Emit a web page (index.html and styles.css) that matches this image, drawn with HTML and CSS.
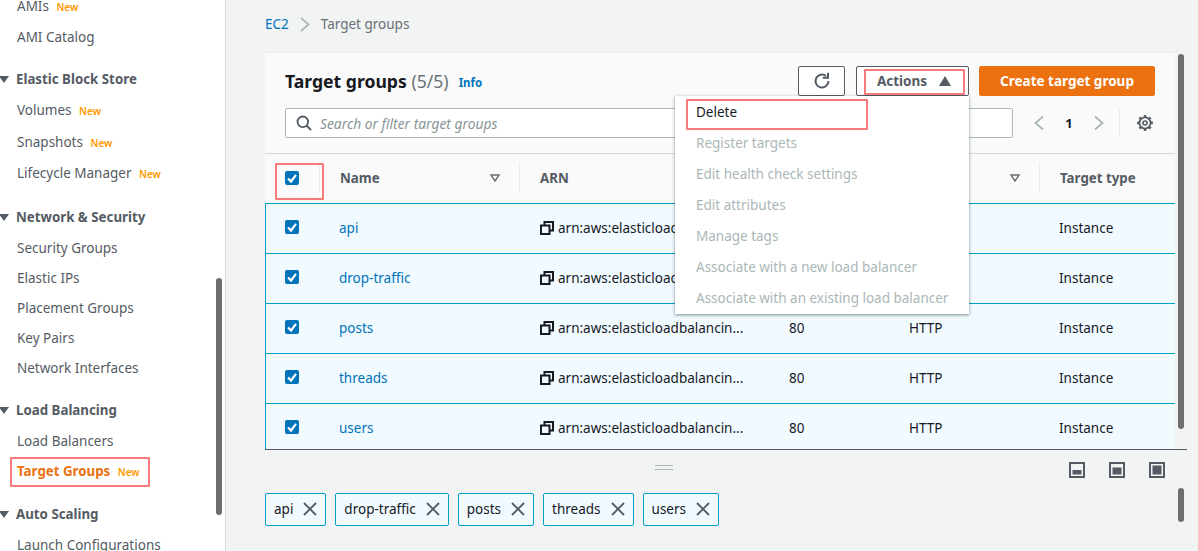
FILE: index.html
```html
<!DOCTYPE html>
<html>
<head>
  <title>Target groups</title>
  <link rel="stylesheet" href="styles.css">
</head>
<body>
  <svg class="defs">
    <symbol id="check" viewBox="0 0 14 14"><path d="M3 7.500 6 10.500 11 3.800" fill="none" stroke="#fff" stroke-width="2.200"/></symbol>
    <symbol id="copy" viewBox="0 0 14 14"><path d="M1 4.500h8.500V13H1zM4.500 4V1H13v8.500h-3" fill="none" stroke="#16191f" stroke-width="2"/></symbol>
    <symbol id="close" viewBox="0 0 14 14"><path d="M1 1 13 13M13 1 1 13" fill="none" stroke="#545b64" stroke-width="1.800"/></symbol>
    <symbol id="sort" viewBox="0 0 10 8"><path d="M1 1h8L5 7z" fill="#fff" stroke="#687078" stroke-width="1.500"/></symbol>
  </svg>

  <aside class="sidebar">
    <ul class="nav">
      <li class="nav-item nav-first">AMIs <span class="new">New</span></li>
      <li class="nav-item">AMI Catalog</li>
      <li class="nav-head">Elastic Block Store</li>
      <li class="nav-item">Volumes <span class="new">New</span></li>
      <li class="nav-item nav-wide">Snapshots <span class="new">New</span></li>
      <li class="nav-item">Lifecycle Manager <span class="new">New</span></li>
      <li class="nav-head nav-head-14">Network &amp; Security</li>
      <li class="nav-item">Security Groups</li>
      <li class="nav-item nav-tight">Elastic IPs</li>
      <li class="nav-item nav-tight">Placement Groups</li>
      <li class="nav-item nav-tight">Key Pairs</li>
      <li class="nav-item nav-tight">Network Interfaces</li>
      <li class="nav-head">Load Balancing</li>
      <li class="nav-item">Load Balancers</li>
      <li class="nav-item nav-tight nav-active">Target Groups <span class="new">New</span></li>
      <li class="nav-head nav-head-13">Auto Scaling</li>
      <li class="nav-item">Launch Configurations</li>
    </ul>
    <div class="side-scroll"></div>
  </aside>

  <main class="main">
    <div class="crumbs">
      <a class="link">EC2</a>
      <svg class="crumb-sep" width="10" height="15" viewBox="0 0 10 15"><path d="M1 1 8.500 7.500 1 14" fill="none" stroke="#aab7b8" stroke-width="1.700"/></svg>
      <span class="crumb-now">Target groups</span>
    </div>

    <section class="panel">
      <div class="panel-head">
        <div class="title-row">
          <h1 class="title">Target groups <span class="count">(5/5)</span></h1>
          <a class="info">Info</a>
          <div class="actions">
            <button class="btn btn-icon">
              <svg width="18" height="18" viewBox="0 0 18 18"><path d="M15.500 9A6.500 6.500 0 1 1 13 3.900" fill="none" stroke="#545b64" stroke-width="2"/><path d="M9.800 5.800h5.200V.8" fill="none" stroke="#545b64" stroke-width="2"/></svg>
            </button>
            <button class="btn btn-actions">Actions <svg width="12" height="10" viewBox="0 0 12 10"><path d="M0 10 6 0l6 10z" fill="#545b64"/></svg></button>
            <button class="btn btn-primary">Create target group</button>
          </div>
        </div>
        <div class="search-row">
          <div class="search">
            <svg width="16" height="16" viewBox="0 0 16 16"><circle cx="6.800" cy="6.800" r="5.300" fill="none" stroke="#545b64" stroke-width="1.800"/><path d="M10.600 10.600 15 15" stroke="#545b64" stroke-width="2"/></svg>
            <span class="placeholder">Search or filter target groups</span>
          </div>
          <div class="pager">
            <svg width="12" height="16" viewBox="0 0 12 16"><path d="M10 1.500 2.500 8l7.500 6.500" fill="none" stroke="#aab7b8" stroke-width="1.800"/></svg>
            <b class="page">1</b>
            <svg width="12" height="16" viewBox="0 0 12 16"><path d="M2 1.500 9.500 8 2 14.500" fill="none" stroke="#aab7b8" stroke-width="1.800"/></svg>
          </div>
          <div class="gear-box">
            <svg width="16" height="16" viewBox="0 0 16 16"><circle cx="8" cy="8" r="5.600" fill="none" stroke="#545b64" stroke-width="1.800"/><circle cx="8" cy="8" r="6.900" fill="none" stroke="#545b64" stroke-width="2" stroke-dasharray="2.500 2.920" transform="rotate(-12 8 8)"/><circle cx="8" cy="8" r="2" fill="none" stroke="#545b64" stroke-width="1.600"/></svg>
          </div>
        </div>
      </div>

      <div class="row row-head">
        <div class="cell-check"><svg class="checkbox"><use href="#check"/></svg></div>
        <div class="cell-th">Name <svg class="sort"><use href="#sort"/></svg></div>
        <div class="cell-th">ARN</div>
        <div class="cell-th"></div>
        <div class="cell-th"><span></span><svg class="sort"><use href="#sort"/></svg></div>
        <div class="cell-th cell-last">Target type</div>
      </div>

      <div class="row row-body">
        <div class="cell-check"><svg class="checkbox"><use href="#check"/></svg></div>
        <a class="link">api</a>
        <div class="arn"><svg class="copy"><use href="#copy"/></svg>arn:aws:elasticloadbalancin...</div>
        <div>80</div><div>HTTP</div><div>Instance</div>
      </div>
      <div class="row row-body">
        <div class="cell-check"><svg class="checkbox"><use href="#check"/></svg></div>
        <a class="link">drop-traffic</a>
        <div class="arn"><svg class="copy"><use href="#copy"/></svg>arn:aws:elasticloadbalancin...</div>
        <div>80</div><div>HTTP</div><div>Instance</div>
      </div>
      <div class="row row-body">
        <div class="cell-check"><svg class="checkbox"><use href="#check"/></svg></div>
        <a class="link">posts</a>
        <div class="arn"><svg class="copy"><use href="#copy"/></svg>arn:aws:elasticloadbalancin...</div>
        <div>80</div><div>HTTP</div><div>Instance</div>
      </div>
      <div class="row row-body">
        <div class="cell-check"><svg class="checkbox"><use href="#check"/></svg></div>
        <a class="link">threads</a>
        <div class="arn"><svg class="copy"><use href="#copy"/></svg>arn:aws:elasticloadbalancin...</div>
        <div>80</div><div>HTTP</div><div>Instance</div>
      </div>
      <div class="row row-body row-end">
        <div class="cell-check"><svg class="checkbox"><use href="#check"/></svg></div>
        <a class="link">users</a>
        <div class="arn"><svg class="copy"><use href="#copy"/></svg>arn:aws:elasticloadbalancin...</div>
        <div>80</div><div>HTTP</div><div>Instance</div>
      </div>
    </section>

    <div class="split-bar">
      <div class="grip"></div>
      <div class="split-icons">
        <svg class="split" viewBox="0 0 16 16"><rect x="1" y="1" width="14" height="14" fill="#f2f3f3" stroke="#545b64" stroke-width="2"/><rect x="3.500" y="8" width="9" height="4.500" fill="#545b64"/></svg>
        <svg class="split" viewBox="0 0 16 16"><rect x="1" y="1" width="14" height="14" fill="#f2f3f3" stroke="#545b64" stroke-width="2"/><rect x="3.500" y="5.500" width="9" height="7" fill="#545b64"/></svg>
        <svg class="split" viewBox="0 0 16 16"><rect x="1" y="1" width="14" height="14" fill="#f2f3f3" stroke="#545b64" stroke-width="2"/><rect x="3.500" y="3.500" width="9" height="9" fill="#545b64"/></svg>
      </div>
    </div>

    <div class="chips">
      <div class="chip">api <svg class="chip-x"><use href="#close"/></svg></div>
      <div class="chip">drop-traffic <svg class="chip-x"><use href="#close"/></svg></div>
      <div class="chip">posts <svg class="chip-x"><use href="#close"/></svg></div>
      <div class="chip">threads <svg class="chip-x"><use href="#close"/></svg></div>
      <div class="chip">users <svg class="chip-x"><use href="#close"/></svg></div>
    </div>

    <ul class="menu">
      <li class="menu-item menu-on">Delete</li>
      <li class="menu-item">Register targets</li>
      <li class="menu-item">Edit health check settings</li>
      <li class="menu-item">Edit attributes</li>
      <li class="menu-item">Manage tags</li>
      <li class="menu-item">Associate with a new load balancer</li>
      <li class="menu-item">Associate with an existing load balancer</li>
    </ul>

    <div class="main-scroll main-scroll-top"></div>
    <div class="main-scroll main-scroll-low"></div>
  </main>

  <div class="mark mark-nav"></div>
  <div class="mark mark-check"></div>
  <div class="mark mark-actions"></div>
  <div class="mark mark-delete"></div>
</body>
</html>
```

FILE: styles.css
```css
* {
  box-sizing: border-box;
}
html, body {
  height: 551px;
  margin: 0;
  overflow: hidden;
}
body {
  display: flex;
  font-family: "Noto Sans", sans-serif;
  font-size: 13.500px;
  color: #16191f;
  background: #f2f3f3;
  position: relative;
}
.defs {
  display: none;
}
.link {
  color: #0073bb;
}

/* sidebar */
.sidebar {
  width: 226px;
  height: 551px;
  flex: none;
  background: #fff;
  border-right: 1px solid #d5dbdb;
  position: relative;
  overflow: hidden;
}
.nav {
  list-style: none;
  margin: 0;
  padding: 0;
  color: #545b64;
}
.nav-item {
  height: 30px;
  line-height: 30px;
  margin-top: 1px;
  padding-left: 17px;
  white-space: nowrap;
}
.nav-first {
  margin-top: -9px;
}
.nav-tight {
  margin-top: 0;
}
.nav-wide {
  margin-top: 2px;
}
.nav-head {
  height: 30px;
  line-height: 30px;
  margin-top: 12px;
  padding-left: 16px;
  font-size: 13.300px;
  font-weight: 700;
  position: relative;
}
.nav-head-14 {
  margin-top: 14px;
}
.nav-head-13 {
  margin-top: 13px;
}
.nav-head::before {
  content: "";
  position: absolute;
  left: -1px;
  top: 12px;
  border-left: 5px solid transparent;
  border-right: 5px solid transparent;
  border-top: 7px solid #545b64;
}
.nav-active {
  color: #ec7211;
  font-size: 13.300px;
  font-weight: 700;
}
.new {
  color: #ff9900;
  font-size: 10px;
  font-weight: 600;
  margin-left: 4px;
}
.side-scroll {
  position: absolute;
  left: 216px;
  top: 278px;
  width: 6px;
  height: 237px;
  border-radius: 3px;
  background: #6e6e6e;
}

/* main area */
.main {
  flex: 1;
  padding: 0 0 0 39px;
  position: relative;
}
.crumbs {
  height: 52px;
  display: flex;
  align-items: center;
  padding-bottom: 4px;
  gap: 11px;
}
.crumb-now {
  color: #687078;
}
.panel {
  width: 910px;
  position: relative;
}
.panel-head {
  height: 102px;
  padding: 13px 20px 0;
  background: #fafafa;
  border-top: 1px solid #eaeded;
  border-bottom: 1px solid #d5dbdb;
}
.title-row {
  display: flex;
  align-items: center;
  height: 30px;
}
.title {
  margin: 0;
  font-size: 17.600px;
  font-weight: 700;
}
.count {
  font-weight: 400;
  color: #687078;
}
.info {
  margin-left: 10px;
  margin-top: 3px;
  color: #0073bb;
  font-size: 11.500px;
  font-weight: 700;
}
.actions {
  margin-left: auto;
  display: flex;
  gap: 11px;
  height: 30px;
}
.btn {
  height: 30px;
  border: 1px solid #545b64;
  border-radius: 2px;
  background: #fff;
  color: #545b64;
  font: 700 13.500px "Noto Sans", sans-serif;
  padding: 0;
}
.btn-icon {
  width: 47px;
  display: flex;
  align-items: center;
  justify-content: center;
}
.btn-actions {
  width: 113px;
  display: flex;
  align-items: center;
  justify-content: center;
  gap: 12px;
  padding-left: 3px;
}
.btn-primary {
  width: 176px;
  margin-left: -1px;
  background: #ec7211;
  border-color: #ec7211;
  color: #fff;
}
.search-row {
  display: flex;
  align-items: center;
  margin-top: 12px;
}
.search {
  width: 728px;
  height: 30px;
  flex: none;
  display: flex;
  align-items: center;
  gap: 8px;
  padding-left: 10px;
  background: #fff;
  border: 1px solid #aab7b8;
  border-radius: 2px;
}
.placeholder {
  color: #879596;
  font-style: italic;
  font-size: 13.800px;
}
.pager {
  width: 106px;
  padding: 0 14px 0 20px;
  display: flex;
  align-items: center;
  justify-content: space-between;
}
.page {
  font-size: 13px;
}
.gear-box {
  height: 30px;
  padding-left: 17px;
  display: flex;
  align-items: center;
  border-left: 1px solid #eaeded;
}

/* table */
.row {
  display: grid;
  align-items: center;
}
.row-head {
  grid-template-columns: 75px 200px 249px 120px 151px 115px;
  height: 49px;
  padding-bottom: 1px;
  background: #fafafa;
  color: #545b64;
  font-size: 13.300px;
  font-weight: 700;
}
.row-body {
  grid-template-columns: 73px 201px 249px 120px 150px 116px;
  height: 50px;
  padding-bottom: 2px;
  background: #f1faff;
  border-top: 1px solid #00a1c9;
  border-left: 1px solid #00a1c9;
}
.row-body .cell-check {
  margin-bottom: 2px;
}
.row-end {
  height: 46px;
  padding: 3px 0 0;
  position: relative;
}
.row-end::after {
  content: "";
  position: absolute;
  left: -1px;
  right: -12px;
  bottom: -1px;
  height: 1px;
  background: #545b64;
}
.cell-check {
  padding-left: 19px;
  display: flex;
}
.row-head .cell-check {
  padding-left: 20px;
  height: 30px;
  align-items: center;
  border-right: 1px solid #eaeded;
  margin-right: 20px;
}
.cell-th {
  height: 30px;
  line-height: 30px;
  display: flex;
  justify-content: space-between;
  align-items: center;
  margin-right: 20px;
  padding-right: 19px;
  border-right: 1px solid #eaeded;
  white-space: nowrap;
}
.cell-last {
  border-right: 0;
  margin-right: 0;
  padding-right: 0;
}
.checkbox {
  width: 14px;
  height: 14px;
  background: #0073bb;
  border-radius: 2px;
}
.sort {
  width: 10px;
  height: 8px;
}
.arn {
  display: flex;
  align-items: center;
  gap: 4px;
  white-space: nowrap;
}
.copy {
  width: 14px;
  height: 14px;
}

/* resize bar and split icons */
.split-bar {
  width: 900px;
  height: 44px;
  position: relative;
  display: flex;
  justify-content: flex-end;
  align-items: center;
  padding-bottom: 2px;
}
.grip {
  position: absolute;
  left: 390px;
  top: 16px;
  width: 18px;
  height: 5px;
  border-top: 1px solid #aab7b8;
  border-bottom: 1px solid #aab7b8;
}
.split-icons {
  display: flex;
  gap: 24px;
}
.split {
  width: 16px;
  height: 16px;
}

/* selected chips */
.chips {
  display: flex;
  gap: 9px;
}
.chip {
  height: 33px;
  display: flex;
  align-items: center;
  gap: 10px;
  padding: 0 8px 1px;
  background: #f1faff;
  border: 1px solid #00a1c9;
  border-radius: 2px;
}
.chip-x {
  width: 14px;
  height: 14px;
}

/* dropdown */
.menu {
  list-style: none;
  margin: 0;
  padding: 1px 0 0;
  position: absolute;
  left: 449px;
  top: 96px;
  width: 294px;
  height: 218px;
  background: #fff;
  box-shadow: 0 1px 3px rgba(0, 28, 36, .5);
  color: #aab7b8;
}
.menu-item {
  height: 31px;
  line-height: 31px;
  padding-left: 21px;
}
.menu-on {
  color: #16191f;
}

/* page scrollbars */
.main-scroll {
  position: absolute;
  left: 952px;
  width: 6px;
  border-radius: 3px;
  background: #6e6e6e;
}
.main-scroll-top {
  top: 54px;
  height: 375px;
}
.main-scroll-low {
  top: 488px;
  height: 34px;
}

/* red annotation boxes drawn over the screenshot */
.mark {
  position: absolute;
  border: 2px solid #f87a7c;
  border-radius: 1px;
}
.mark-nav {
  left: 10px;
  top: 457px;
  width: 140px;
  height: 30px;
}
.mark-check {
  left: 275px;
  top: 163px;
  width: 49px;
  height: 37px;
}
.mark-actions {
  left: 864px;
  top: 69px;
  width: 101px;
  height: 26px;
}
.mark-delete {
  left: 686px;
  top: 99px;
  width: 182px;
  height: 31px;
}
```
